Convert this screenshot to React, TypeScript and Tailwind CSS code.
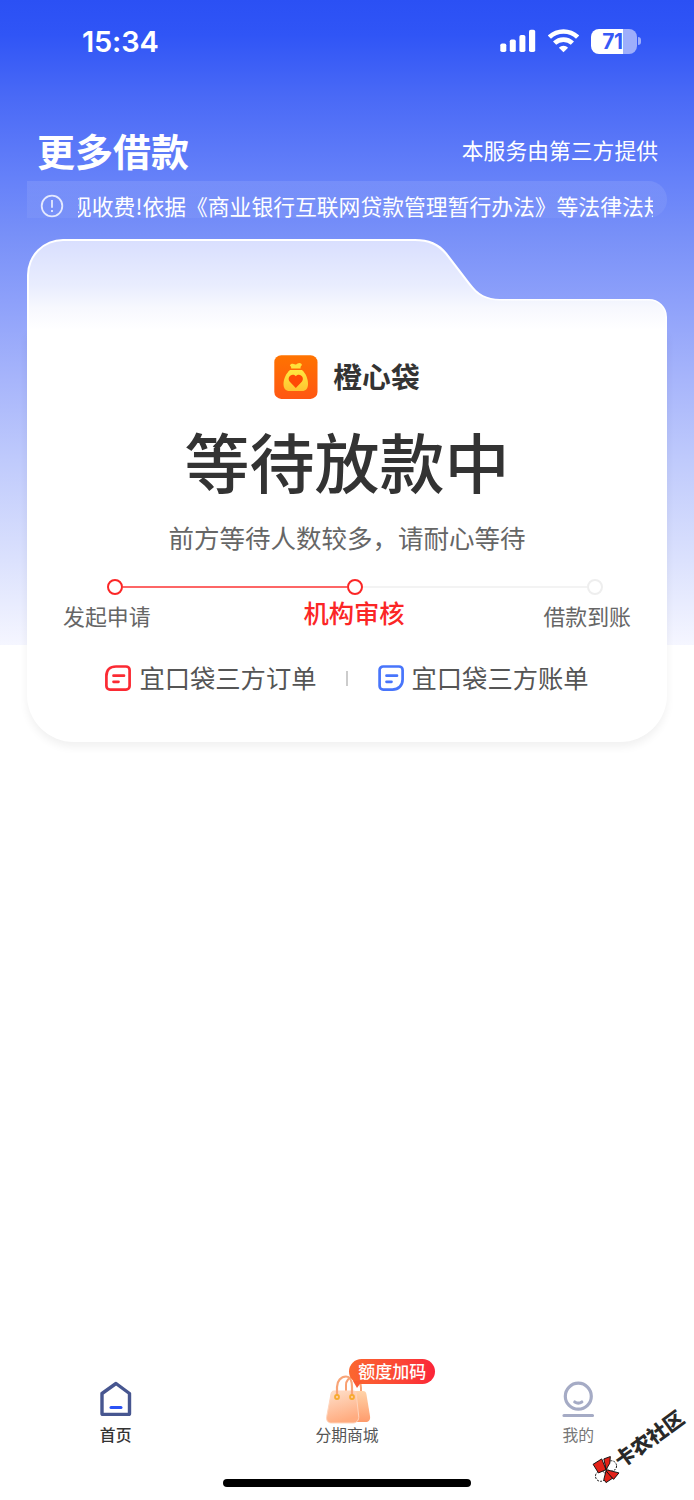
type Step = { label: string; state: "done" | "current" | "todo" };

const steps: Step[] = [
  { label: "发起申请", state: "done" },
  { label: "机构审核", state: "current" },
  { label: "借款到账", state: "todo" },
];

const notice = "现收费!依据《商业银行互联网贷款管理暂行办法》等法律法规";

function StatusBar() {
  return (
    <div className="flex h-[82px] items-center justify-between pl-[82px] pr-[53px] text-white">
      <span className="pt-px font-[Inter] text-[29px] leading-none font-semibold tracking-[-0.2px]">15:34</span>
      <div className="flex items-center gap-[12px]">
        <svg width="36" height="24" viewBox="0 0 36 24" fill="white">
          <rect x="0.3" y="14.5" width="6" height="8.5" rx="1.8" />
          <rect x="9.8" y="10.5" width="6" height="12.5" rx="1.8" />
          <rect x="19.4" y="6" width="6" height="17" rx="1.8" />
          <rect x="29" y="0.7" width="6.2" height="22.3" rx="1.8" />
        </svg>
        <svg width="31" height="24" viewBox="0 0 31 24" fill="none" stroke="white" strokeWidth="4.6">
          <path d="M1.400 8.200a20.3 20.3 0 0 1 28.200 0" />
          <path d="M6.600 14.200a12.800 12.800 0 0 1 17.800 0" />
          <path d="M15.5 23.3l-4.6-4.600a6.700 6.700 0 0 1 9.200 0z" fill="white" stroke="none" />
        </svg>
        <div className="flex items-center gap-px">
          <div className="flex h-[25px] w-[46px] items-center justify-center rounded-[8px] bg-[linear-gradient(90deg,#fff_70%,#9eaefb_70%)] pr-[3px]">
            <span className="font-[Inter] text-[21px] leading-[25px] font-bold tracking-[-0.5px] text-[#3659f6]">71</span>
          </div>
          <span className="h-[8px] w-[3px] rounded-r-full bg-[#9eaefb]" />
        </div>
      </div>
    </div>
  );
}

function BagLogo() {
  return (
    <svg width="44" height="44" viewBox="0 0 44 44">
      <defs>
        <linearGradient id="logoBg" x1="0" y1="0" x2="0" y2="1">
          <stop offset="0" stopColor="#ff7300" />
          <stop offset="1" stopColor="#ff5713" />
        </linearGradient>
        <linearGradient id="logoBag" x1="0" y1="0" x2="0" y2="1">
          <stop offset="0" stopColor="#ffe93f" />
          <stop offset="1" stopColor="#ffc331" />
        </linearGradient>
      </defs>
      <rect x="0.3" y="0.3" width="43.2" height="43.6" rx="7" fill="url(#logoBg)" />
      <path d="M17.2 13.4c.2-1.600-.5-2.300-1.400-3 .8-1.700 2.600-1.900 3.800-1.400 1 .4 1.700.7 2.500.4 1-.5 1.800-1.400 3.300-1.400 1.500 0 2.700 1 2.500 2.300-1 .5-1.500 1.500-1.300 3.100z" fill="#ffe03b" />
      <path d="M16 15h12c3.500 3 6 8.500 6 14 0 4.500-2.200 7-6 7H15.500c-3.800 0-6-2.500-6-7 0-5.500 3-11 6.500-14z" fill="url(#logoBag)" />
      <path d="M21.800 33l-6-6.300c-3.500-4 2-9.600 6-5.500 4-4.100 9.500 1.500 6 5.500z" fill="#ff4a05" />
    </svg>
  );
}

function FolderTop() {
  return (
    <svg width="640" height="91" viewBox="0 0 640 91" className="block">
      <defs>
        <linearGradient id="folder" x1="0" y1="0" x2="0" y2="1">
          <stop offset="0" stopColor="#d9dffe" />
          <stop offset="0.5" stopColor="#e9edfe" />
          <stop offset="0.75" stopColor="#f7f8fe" />
          <stop offset="1" stopColor="#ffffff" />
        </linearGradient>
      </defs>
      <path
        d="M0 91V36A36 36 0 0 1 36 0H388C402 0 412 4 420 14L443 44C451 55 460 60 473 60H622A18 18 0 0 1 640 78V91z"
        fill="#ffffff"
      />
      <path
        d="M2 91V36A34 34 0 0 1 36 2H388C401 2 410.500 6 418.500 15.500L441.500 45.500C450 56.500 459 61.500 473 61.500H622A16.500 16.500 0 0 1 638.500 78V91z"
        fill="url(#folder)"
      />
    </svg>
  );
}

function StepDot({ state }: { state: Step["state"] }) {
  return (
    <span className={`size-4 shrink-0 rounded-full border-2 bg-white ${state === "todo" ? "border-[#eeeeee]" : "border-[#fb2626]"}`} />
  );
}

function DocIcon({ blue = false }: { blue?: boolean }) {
  return (
    <svg width="28" height="28" viewBox="0 0 28 28" fill="none" stroke={blue ? "#4875fb" : "#fb2a33"} strokeWidth="2.700" strokeLinecap="round">
      {blue ? (
        <path d="M6.200 2.500H22a3.600 3.600 0 0 1 3.600 3.600V15.500C25.600 21.500 21.500 25.600 15.500 25.600H6.200A3.600 3.600 0 0 1 2.600 22V6.100A3.600 3.600 0 0 1 6.200 2.500z" />
      ) : (
        <path d="M12 2.500H22a3.600 3.600 0 0 1 3.600 3.600V22a3.600 3.600 0 0 1-3.600 3.600H6A3.600 3.600 0 0 1 2.400 22V12C2.400 6 6 2.500 12 2.500z" />
      )}
      <path d="M9.500 11.700H20M9.500 17.800H14.500" />
    </svg>
  );
}

function ShoppingBag() {
  return (
    <svg width="46" height="50" viewBox="0 0 46 50" fill="none" className="ml-[4px]">
      <defs>
        <linearGradient id="bagFront" x1="0" y1="0" x2="0.300" y2="1">
          <stop offset="0" stopColor="#fee0cb" />
          <stop offset="1" stopColor="#ffac80" />
        </linearGradient>
        <linearGradient id="bagBack" x1="0" y1="0" x2="0" y2="1">
          <stop offset="0" stopColor="#ffd3a8" />
          <stop offset="1" stopColor="#fe9b6c" />
        </linearGradient>
      </defs>
      <path d="M20 17V10c0-4 3-8 7-8s8 5 8 11v6" stroke="#f9a071" strokeWidth="2" />
      <path d="M22 16H37c2 0 3 1 3.400 3l3.600 22c.6 4-1.400 6-4.400 6H25z" fill="url(#bagBack)" />
      <path d="M8 16H27c2 0 3 1 3.200 3l2.500 22c.5 4-2 7-5.500 7H5.500c-3.500 0-5.500-2.500-4.800-6.500L5 19c.4-2 1.200-3 3-3z" fill="url(#bagFront)" stroke="#ffd5bd" />
      <path d="M11 21V12C11 6 15 1.500 20 1.500S26 6 26 12v9" stroke="#f8a477" strokeWidth="2.200" />
      <circle cx="11" cy="22" r="2" stroke="#f7ab30" strokeWidth="1.800" />
      <circle cx="26" cy="22" r="2" stroke="#f7ab30" strokeWidth="1.800" />
    </svg>
  );
}

function TabBar() {
  return (
    <nav className="mt-auto grid h-[146px] grid-cols-3 text-[15.800px] leading-[24px]">
      <div className="flex flex-col items-center pt-[26px] text-[#333333]">
        <svg width="36" height="38" viewBox="0 0 36 38" fill="none" strokeLinecap="round" strokeLinejoin="round">
          <path d="M18 3.500L31.500 13.500V33.400a1 1 0 0 1-1 1H5a1 1 0 0 1-1-1V13.500z" stroke="#475690" strokeWidth="3.400" />
          <path d="M13 27.500H23" stroke="#2b52f5" strokeWidth="3" />
        </svg>
        <span className="mt-[5px] font-medium">首页</span>
      </div>
      <div className="relative flex flex-col items-center pt-[21px] text-[#555555]">
        <ShoppingBag />
        <span className="-mt-[2px]">分期商城</span>
        <span className="absolute top-[5px] left-[118px] h-[25px] w-[86px] rounded-[13px] bg-gradient-to-r from-[#fb662f] to-[#fb2338] text-center text-[17px] leading-[24px] font-medium text-white">
          额度加码
          <svg width="9" height="7" viewBox="0 0 9 7" className="absolute top-[22px] left-[4px]">
            <path d="M0 0H9L4 7z" fill="#fa5932" />
          </svg>
        </span>
      </div>
      <div className="flex flex-col items-center pt-[26px] text-[#777777]">
        <svg width="36" height="38" viewBox="0 0 36 38" fill="none" stroke="#a5abc5" strokeWidth="3.200" strokeLinecap="round">
          <circle cx="18.300" cy="16.200" r="13" />
          <path d="M14.800 22c2 1.300 5 1.300 7 0M4 35.500H32.500" />
        </svg>
        <span className="mt-[5px]">我的</span>
      </div>
    </nav>
  );
}

function Watermark() {
  return (
    <div className="absolute top-[1431px] left-[585px] flex w-[110px] -rotate-[36deg] items-center">
      <svg width="28" height="28" viewBox="0 0 26 26" stroke="#111111" strokeWidth="0.900" className="-ml-px shrink-0 rotate-[36deg]">
        <circle cx="18" cy="9.500" r="4.800" fill="white" strokeDasharray="2 1" />
        <circle cx="8" cy="19" r="4.800" fill="white" strokeDasharray="2 1" />
        <path d="M1 8L9 3L13 13L6 16z" fill="#e32219" />
        <path d="M11 3L17 0.800L16.500 7L13 13z" fill="#e32219" />
        <path d="M13 13L25 16L20 22L14 16z" fill="#e32219" />
        <path d="M13 14L19 21L13 25L11 22z" fill="#e32219" />
      </svg>
      <span className="-ml-px text-[20px] leading-[26px] font-black whitespace-nowrap text-[#292929]">卡农社区</span>
    </div>
  );
}

export default function App() {
  return (
    <main className="relative flex h-[1500px] w-[694px] flex-col overflow-hidden bg-white bg-[linear-gradient(180deg,#2b50f4_0px,#3055f6_35px,#4969f6_95px,#6480f9_175px,#7890f8_235px,#8da0fa_300px,#a7b5fb_380px,#bfcafc_460px,#dbe1fd_560px,#f5f6ff_645px)] bg-[length:100%_645px] bg-no-repeat font-['Noto_Sans_CJK_SC',sans-serif]">
      <StatusBar />
      <header className="flex h-[99px] items-center justify-between pt-[36px] pr-[36px] pl-[37px] text-white">
        <h1 className="text-[38px] leading-[56px] font-bold">更多借款</h1>
        <span className="pt-px text-[21.800px] leading-[32px]">本服务由第三方提供</span>
      </header>

      <div className="mx-[27px] flex h-[37px] shrink-0 items-end overflow-hidden rounded-r-[19px] bg-gradient-to-b from-white/10 to-white/5 pr-[14px] pl-[13px] text-white">
        <svg width="24" height="24" viewBox="0 0 24 24" fill="none" stroke="white" strokeWidth="1.800" className="shrink-0 opacity-80">
          <circle cx="12" cy="12" r="10.300" />
          <path d="M12 6V13.800M12 16V18" />
        </svg>
        <div className="ml-[14px] flex h-[37px] flex-1 overflow-hidden">
          <span className="-ml-[8px] pt-[9px] text-[21.800px] leading-[32px] whitespace-nowrap">{notice}</span>
        </div>
      </div>

      <section className="mx-[27px] mt-[21px]">
        <FolderTop />
        <div className="h-[412px] rounded-b-[47px] bg-white pt-[25px] shadow-[0_5px_9px_rgba(0,0,0,0.06)]">
          <div className="flex h-[44px] items-center justify-center gap-[15px]">
            <BagLogo />
            <span className="pb-[3px] text-[28.800px] leading-[44px] font-bold text-[#333333]">橙心袋</span>
          </div>
          <h2 className="mt-[19px] text-center text-[65px] leading-[84px] font-medium text-[#333333]">等待放款中</h2>
          <p className="mt-[16px] text-center text-[25.500px] leading-[38px] text-[#666666]">前方等待人数较多，请耐心等待</p>

          <div className="mt-[23px] flex items-center pr-[64px] pl-[80px]">
            <StepDot state="done" />
            <span className="h-[2px] flex-1 bg-[#fd6666]" />
            <StepDot state="current" />
            <span className="h-[2px] flex-1 bg-[#f3f3f3]" />
            <StepDot state="todo" />
          </div>
          <div className="-mt-[2px] flex h-[38px] items-start justify-between px-[36px]">
            {steps.map((s) => (
              <span
                key={s.label}
                className={s.state === "current" ? "ml-[14px] text-[25.300px] leading-[38px] font-medium text-[#fb2626]" : "pt-[5px] text-[21.900px] leading-[36px] text-[#666666]"}
              >
                {s.label}
              </span>
            ))}
          </div>

          <div className="mt-[28px] flex h-[38px] items-center justify-center pr-px text-[25.300px] text-[#555555]">
            <DocIcon />
            <span className="ml-[7px]">宜口袋三方订单</span>
            <span className="mx-[29px] h-[15px] w-[2px] bg-[#cccccc]" />
            <DocIcon blue />
            <span className="ml-[7px]">宜口袋三方账单</span>
          </div>
        </div>
      </section>

      <TabBar />
      <div className="absolute bottom-[13px] left-[223px] h-[8px] w-[248px] rounded-full bg-black" />
      <Watermark />
    </main>
  );
}
